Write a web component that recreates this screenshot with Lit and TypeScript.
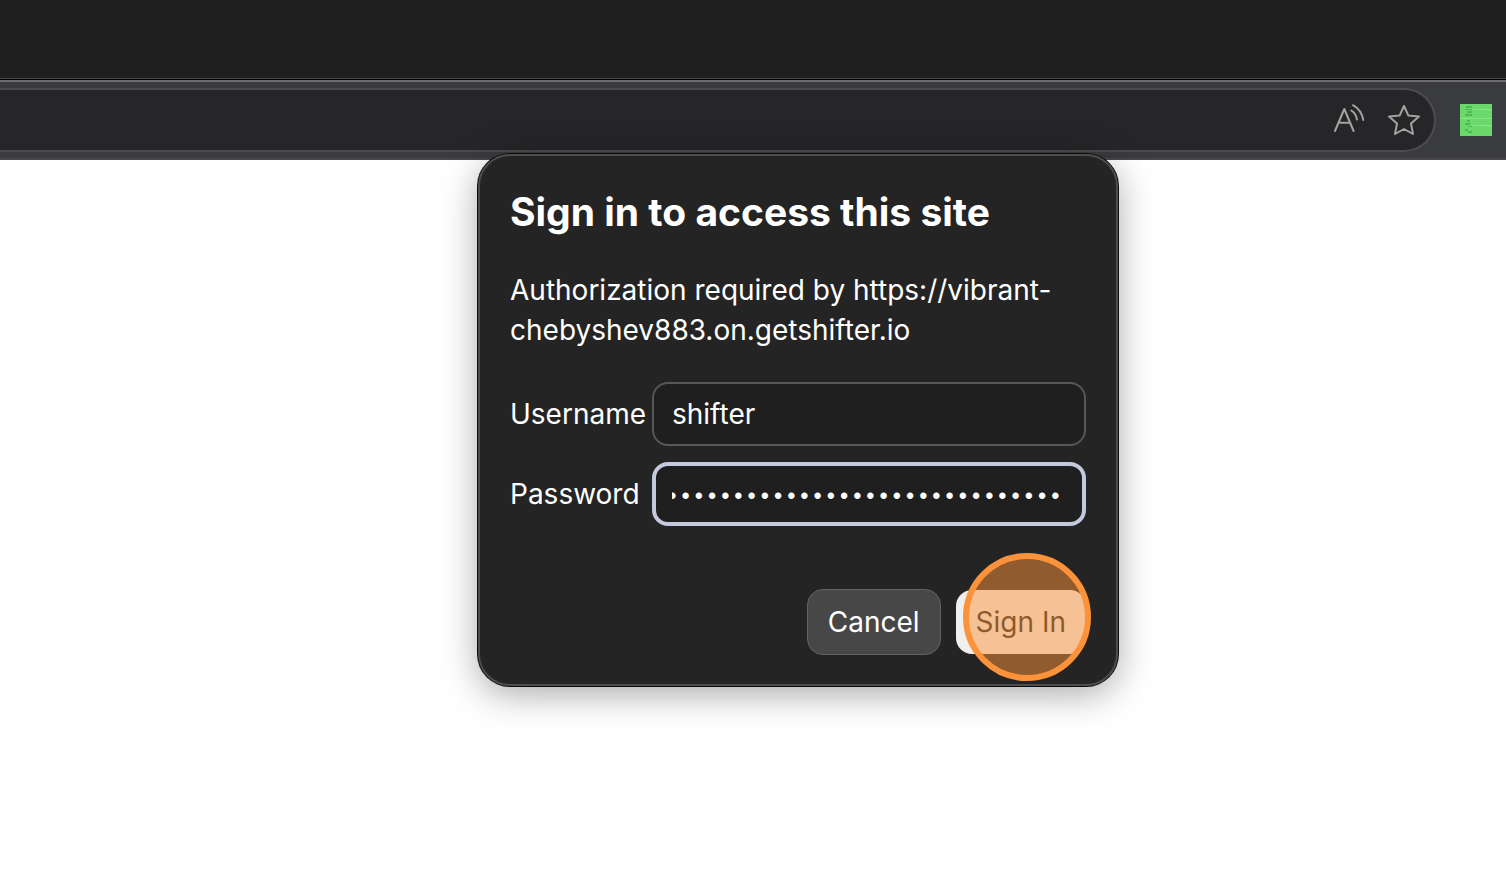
import { LitElement, html, css, svg } from "lit";
import { customElement, state, query } from "lit/decorators.js";

const STAR = svg`<path d="M16 2 L20.3 11.4 L31 12.6 L23 19.6 L25 30 L16 25 L7 30 L9 19.6 L1 12.6 L11.7 11.4 Z" />`;

@customElement("browser-toolbar")
export class BrowserToolbar extends LitElement {
  static styles = css`
    :host { display: block; }
    .tabs { height: 78px; background: #1f1f1f; }
    .seam { border-top: 1px solid #4a4a4c; border-bottom: 2px solid #6c6c70; height: 1px; background: #000; }
    .bar {
      display: flex; align-items: center; gap: 24px; box-sizing: border-box;
      height: 78px; padding: 0 14px 0 0; background: #3a3b3f; border-bottom: 2px solid #48484b;
    }
    .address {
      flex: 1; display: flex; justify-content: flex-end; align-items: center; gap: 22px;
      box-sizing: border-box; height: 64px; padding-right: 14px;
      background: #262628; border: 2px solid #4c4c4f; border-left: 0; border-radius: 0 32px 32px 0;
    }
    button { display: block; padding: 0; border: 0; background: none; }
    svg { display: block; width: 32px; height: 32px; fill: none; stroke: #a3a3a4; stroke-width: 2; stroke-linecap: round; stroke-linejoin: round; }
    .extension svg { stroke: none; }
  `;

  render() {
    return html`
      <div class="tabs"></div>
      <div class="seam"></div>
      <div class="bar">
        <div class="address">
          <button aria-label="Read aloud">
            <svg viewBox="0 0 32 32">
              <path d="M1 27 L10.3 5 L19.6 27 M4.5 18.7 H16.2 M17.3 6.5 Q22 9.5 23 15.5 M19 1.2 Q27.5 6 29.3 16" />
            </svg>
          </button>
          <button aria-label="Add to favorites"><svg viewBox="0 0 32 32">${STAR}</svg></button>
        </div>
        <button class="extension" aria-label="Extension">
          <svg viewBox="0 0 32 32">
            <rect width="32" height="32" fill="#6bd86c" />
            <path fill="#88e685" d="M0 14h32v1H0zM13 5h19v1H13zM13 21h19v1H13z" />
            <path fill="#4fb851" d="M6 2h6v2H6zM5 5h7v1H5zM7 7h5v2H7zM5 10h7v2H5zM7 16h3v2H7zM5 19h5v2H5zM8 22h4v1H8zM5 25h3v2H5zM8 27h4v2H8z" />
          </svg>
        </button>
      </div>
    `;
  }
}

@customElement("sign-in-dialog")
export class SignInDialog extends LitElement {
  static styles = css`
    :host {
      display: block; box-sizing: border-box; padding: 30px 30px 29px; color: #fff;
      background: #242424; border: 2px solid #4d4d4d; border-radius: 32px;
      box-shadow: 0 0 0 1px #0c0c0c, 0 8px 36px rgba(0, 0, 0, 0.34);
      font: 28px/40px Inter, "Liberation Sans", sans-serif;
    }
    h1 { margin: 0; font-size: 39px; line-height: 52px; font-weight: 700; }
    p { margin: 32px 0 0; }
    .fields { display: grid; grid-template-columns: 134px 1fr; gap: 16px 8px; align-items: center; margin-top: 32px; }
    input {
      box-sizing: border-box; width: 100%; height: 64px; padding: 0 18px; color: #fff;
      background: #1f1f1f; border: 2px solid #575757; border-radius: 16px; font: inherit; outline: none;
    }
    .focused {
      padding: 6px 20px 0 16px; border: 4px solid #c4c9de; caret-color: transparent;
      font: bold 22px "Liberation Mono", monospace;
    }
    .actions { display: flex; justify-content: flex-end; gap: 15px; margin-top: 63px; }
    button {
      box-sizing: border-box; height: 66px; padding: 0 20px; font: inherit; color: #fff;
      background: #474747; border: 1px solid #636363; border-radius: 16px;
    }
    .primary { height: 64px; margin: 1px 0; border: 0; background: #f0efee; color: #1f1f1f; }
    .target { position: relative; }
    .marker {
      position: absolute; left: 7px; top: -36px; box-sizing: border-box; width: 128px; height: 128px;
      border: 6px solid #fc9239; border-radius: 50%; background: rgba(251, 147, 57, 0.5); pointer-events: none;
    }
  `;

  @state() private username = "shifter";
  @state() private password = "shifter-vibrant-chebyshev883-getshifter";
  @query("#password") private passwordInput!: HTMLInputElement;

  firstUpdated() {
    // Keep the end of a long password in view.
    this.passwordInput.scrollLeft = this.passwordInput.scrollWidth;
  }

  render() {
    return html`
      <h1>Sign in to access this site</h1>
      <p>Authorization required by https://vibrant-chebyshev883.on.getshifter.io</p>
      <div class="fields">
        <label for="username">Username</label>
        <input id="username" type="text" .value=${this.username} />
        <label for="password">Password</label>
        <input id="password" class="focused" type="password" .value=${this.password} />
      </div>
      <div class="actions">
        <button type="button">Cancel</button>
        <div class="target">
          <button type="button" class="primary">Sign In</button>
          <span class="marker"></span>
        </div>
      </div>
    `;
  }
}

@customElement("app-root")
export class AppRoot extends LitElement {
  static styles = css`
    :host { display: block; position: relative; min-height: 100vh; background: #fff; }
    .dialog { position: absolute; left: 478px; top: 154px; width: 640px; }
  `;

  render() {
    return html`
      <browser-toolbar></browser-toolbar>
      <sign-in-dialog class="dialog" role="dialog" aria-label="Sign in"></sign-in-dialog>
    `;
  }
}
